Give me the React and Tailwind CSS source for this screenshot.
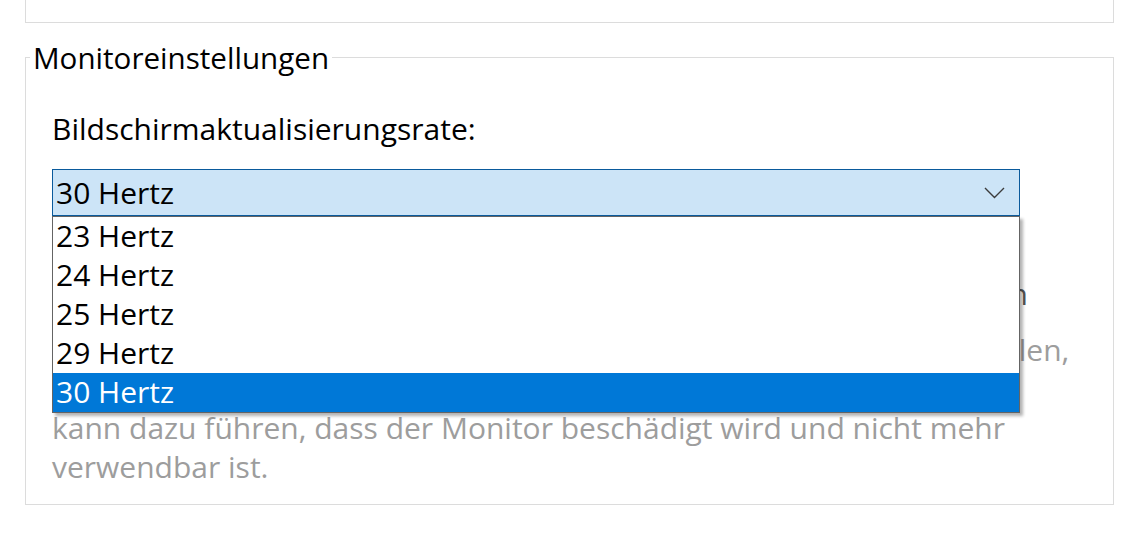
const rates = ["23 Hertz", "24 Hertz", "25 Hertz", "29 Hertz", "30 Hertz"];

const hint = [
  "Wenn dieses Kontrollkästchen deaktiviert ist, können Sie Modi einstellen,",
  "die der Monitor nicht anzeigen kann. Das Auswählen dieser Modi",
  "kann dazu führen, dass der Monitor beschädigt wird und nicht mehr",
  "verwendbar ist.",
];

function Chevron() {
  return (
    <svg width="21" height="12" viewBox="0 0 21 12" fill="none">
      <polyline points="1,1 10.5,10.5 20,1" stroke="#3c3c3c" strokeWidth="1.4" />
    </svg>
  );
}

function RateSelect() {
  const selected = "30 Hertz";
  return (
    <div className="relative mt-[21px] w-[968px]">
      <div className="flex h-[47px] items-center justify-between border border-[#0a5a9c] bg-[#cce4f7] pl-[3px] pr-[14px] leading-[45px] text-black">
        <span>{selected}</span>
        <Chevron />
      </div>
      <ul className="absolute left-0 top-full z-10 w-full border border-[#646464] bg-white shadow-[3px_3px_3px_rgba(0,0,0,0.3)]">
        {rates.map((rate) => (
          <li
            key={rate}
            className={
              rate === selected
                ? "h-[39px] bg-[#0078d7] pl-[3px] leading-[38px] text-white"
                : "h-[39px] pl-[3px] leading-[38px] text-black"
            }
          >
            {rate}
          </li>
        ))}
      </ul>
    </div>
  );
}

export default function App() {
  return (
    <div
      className="min-h-screen bg-white pl-[25px] pr-[16px] text-[30px] text-black"
      style={{ fontFamily: '"Open Sans", "Noto Sans", sans-serif' }}
    >
      <div className="h-[23px] border-x border-b border-[#dcdcdc]" />

      <fieldset className="mt-[17px] border border-[#dcdcdc]">
        <legend className="ml-[4px] px-[3px] text-[29.6px] leading-[35px]">Monitoreinstellungen</legend>

        <div className="pl-[26px] pt-[35px] pb-[18px]">
          <div className="leading-[38px]">Bildschirmaktualisierungsrate:</div>

          <RateSelect />

          <label className="mt-[59px] flex items-center gap-[18px] leading-[38px] text-[#555555]">
            <span className="h-[32px] w-[32px] border border-[#333333] bg-white" />
            <span className="whitespace-nowrap">Modi ausblenden, die dieser Monitor nicht korrekt darstellen kann</span>
          </label>

          <p className="mt-[17px] leading-[39px] text-[#9d9d9d]">
            {hint.map((line) => (
              <span key={line} className="block whitespace-nowrap">
                {line}
              </span>
            ))}
          </p>
        </div>
      </fieldset>
    </div>
  );
}
